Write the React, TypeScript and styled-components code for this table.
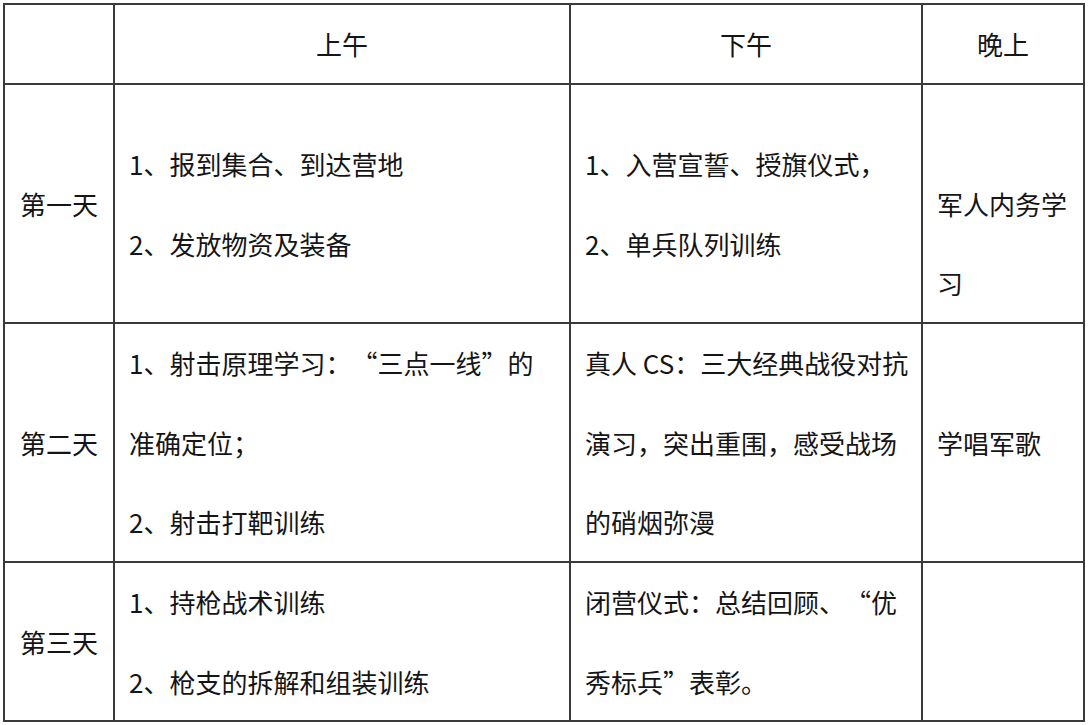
import React from 'react';
import styled, { createGlobalStyle } from 'styled-components';

const GlobalStyle = createGlobalStyle`
	html, body {
		margin: 0;
		padding: 0;
		background: #ffffff;
	}
	body {
		font-family: "Noto Sans CJK SC", "Noto Sans", sans-serif;
		color: #151515;
	}
`;

const Page = styled.div`
	padding: 3px;
`;

// gaps show the grid background through, which draws the ruling lines
const Table = styled.div`
	display: grid;
	grid-template-columns: 108px 454px 350px 160px;
	grid-template-rows: 78px 237px 237px 157px;
	gap: 2px;
	padding: 2px;
	width: max-content;
	background: #3a3a3a;
`;

const Cell = styled.div<{ $align?: 'left' | 'center' }>`
	display: flex;
	flex-direction: column;
	justify-content: center;
	align-items: ${p => (p.$align === 'center' ? 'center' : 'flex-start')};
	padding: 0 13px 0 ${p => (p.$align === 'center' ? '13px' : '14px')};
	background: #ffffff;
	font-size: 26px;
	line-height: 79.5px;
	overflow: hidden;
`;

const Line = styled.div`
	white-space: nowrap;
`;

// the source uses full-width curly quotes
const Quote = styled.span<{ $open?: boolean }>`
	display: inline-block;
	width: 26px;
	text-align: ${p => (p.$open ? 'right' : 'left')};
`;

interface IRow {
	day: string;
	am: string[];
	pm: string[];
	night: string[];
}

const rows: IRow[] = [
	{
		day: '第一天',
		am: ['1、报到集合、到达营地', '2、发放物资及装备'],
		pm: ['1、入营宣誓、授旗仪式，', '2、单兵队列训练'],
		night: ['', '军人内务学', '习'],
	},
	{
		day: '第二天',
		am: ['1、射击原理学习：“三点一线”的', '准确定位；', '2、射击打靶训练'],
		pm: ['真人 CS：三大经典战役对抗', '演习，突出重围，感受战场', '的硝烟弥漫'],
		night: ['学唱军歌'],
	},
	{
		day: '第三天',
		am: ['1、持枪战术训练', '2、枪支的拆解和组装训练'],
		pm: ['闭营仪式：总结回顾、“优', '秀标兵”表彰。'],
		night: [],
	},
];

function renderText(t: string) {
	if (t === '') return '\u00a0';
	return t.split(/([“”])/).map((part, i) => {
		if (part === '“') return <Quote key={i} $open>“</Quote>;
		if (part === '”') return <Quote key={i}>”</Quote>;
		return part;
	});
}

function Lines({ items }: { items: string[] }) {
	return (
		<>
			{items.map((t, i) => (
				<Line key={i}>{renderText(t)}</Line>
			))}
		</>
	);
}

export default function App() {
	return (
		<Page lang="zh-CN">
			<GlobalStyle />
			<Table>
				<Cell $align="center" />
				<Cell $align="center">上午</Cell>
				<Cell $align="center">下午</Cell>
				<Cell $align="center">晚上</Cell>
				{rows.map(r => (
					<React.Fragment key={r.day}>
						<Cell $align="center">{r.day}</Cell>
						<Cell>
							<Lines items={r.am} />
						</Cell>
						<Cell>
							<Lines items={r.pm} />
						</Cell>
						<Cell>
							<Lines items={r.night} />
						</Cell>
					</React.Fragment>
				))}
			</Table>
		</Page>
	);
}
